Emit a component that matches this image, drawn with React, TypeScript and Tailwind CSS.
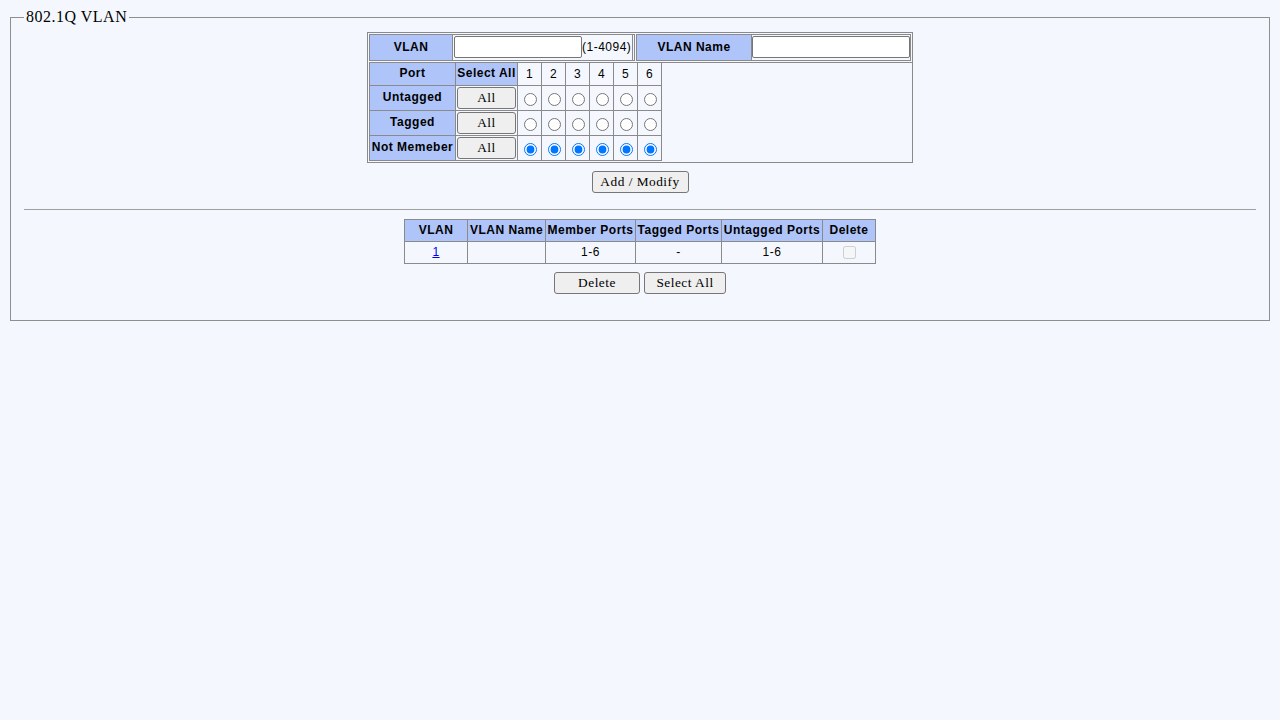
// @ts-nocheck
import React from "react";

const LINE = "bg-[#8a8a8a]";
const BLUE = "bg-[#afc4f8]";
const PAGE = "bg-[#f4f8fe]";
const SANS = "font-['Liberation_Sans',Arial,sans-serif] text-[12px] tracking-[0.5px] text-black";
const SERIF = "font-['Liberation_Serif','Times_New_Roman',serif] tracking-[0.5px]";

function Btn({ w, children }) {
  return (
    <button
      type="button"
      className={`${w} h-[22px] bg-[#efefef] border border-[#767676] rounded-[3px] text-[13.33px] text-black ${SERIF} flex items-center justify-center leading-none`}
    >
      {children}
    </button>
  );
}

function Head({ children, className = "" }) {
  return (
    <div className={`${BLUE} flex items-center justify-center font-bold whitespace-nowrap pb-px ${className}`}>
      {children}
    </div>
  );
}

function Cell({ children }) {
  return <div className={`${PAGE} flex items-center justify-center whitespace-nowrap`}>{children}</div>;
}

const ports = [1, 2, 3, 4, 5, 6];
const rows = [
  { key: "u", label: "Untagged" },
  { key: "t", label: "Tagged" },
  { key: "n", label: "Not Memeber" },
];

export default function App() {
  return (
    <div className={`min-h-screen ${PAGE} p-2 leading-[normal] ${SERIF}`}>
      <fieldset className="mx-[2px] border border-[#8f8f8f] px-3 pt-[5.6px] pb-[26px]">
        <legend className="px-[2px] ml-px text-[16px] leading-[normal] text-black">802.1Q VLAN</legend>

        {/* VLAN form */}
        <div className={`${SANS} mx-auto w-[546px] border border-[#8a8a8a] pl-px pt-px pb-px flex flex-col gap-px`}>
          <div className="flex gap-px">
            <div className="flex w-[266px] h-[27px] border border-[#8a8a8a]">
              <Head className="w-[83px] border-r border-[#8a8a8a]">VLAN</Head>
              <div className="w-[180px] border-r border-[#8a8a8a] flex items-center pl-px">
                <input type="text" className="w-[128px] h-[22px] border border-[#767676] rounded-[2px] bg-white" />
                <span>(1-4094)</span>
              </div>
            </div>
            <div className="flex w-[275px] h-[27px] border border-[#8a8a8a]">
              <Head className="w-[115px] border-r border-[#8a8a8a]">VLAN Name</Head>
              <div className="w-[158px] flex items-center">
                <input type="text" className="w-[158px] h-[22px] border border-[#767676] rounded-[2px] bg-white" />
              </div>
            </div>
          </div>

          <div className="w-[543px] border-t border-[#8a8a8a]">
            <div className={`w-[293px] grid grid-cols-[85px_61px_23px_23px_23px_23px_23px_23px] grid-rows-[22px_24px_24px_24px] gap-px px-px pb-px ${LINE}`}>
              <Head>Port</Head>
              <Head>Select All</Head>
              {ports.map((p) => (
                <Cell key={p}>{p}</Cell>
              ))}
              {rows.map((r) => (
                <React.Fragment key={r.key}>
                  <Head>{r.label}</Head>
                  <Cell>
                    <Btn w="w-[59px]">All</Btn>
                  </Cell>
                  {ports.map((p) => (
                    <Cell key={p}>
                      <input
                        type="radio"
                        name={"port" + p}
                        defaultChecked={r.key === "n"}
                        className="mt-[3px] ml-[2px] mr-0 mb-0 w-[13px] h-[13px]"
                      />
                    </Cell>
                  ))}
                </React.Fragment>
              ))}
            </div>
          </div>
        </div>

        <div className="mt-2 flex justify-center">
          <Btn w="w-[97px]">Add / Modify</Btn>
        </div>

        <hr className="mt-[16px] mx-px border-t border-[#a0a0a0]" />

        {/* VLAN list */}
        <div className={`${SANS} mt-[9px] mx-auto w-[472px] grid grid-cols-[62px_77px_89px_85px_100px_52px] grid-rows-[21px_21px] gap-px p-px ${LINE}`}>
          <Head>VLAN</Head>
          <Head>VLAN Name</Head>
          <Head>Member Ports</Head>
          <Head>Tagged Ports</Head>
          <Head>Untagged Ports</Head>
          <Head>Delete</Head>
          <Cell>
            <a href="#" className="text-[#0000ee] underline">1</a>
          </Cell>
          <Cell></Cell>
          <Cell>1-6</Cell>
          <Cell>-</Cell>
          <Cell>1-6</Cell>
          <Cell>
            <input type="checkbox" disabled className="m-0 w-[13px] h-[13px]" />
          </Cell>
        </div>

        <div className="mt-2 flex justify-center gap-[4px]">
          <Btn w="w-[86px]">Delete</Btn>
          <Btn w="w-[82px]">Select All</Btn>
        </div>
      </fieldset>
    </div>
  );
}
